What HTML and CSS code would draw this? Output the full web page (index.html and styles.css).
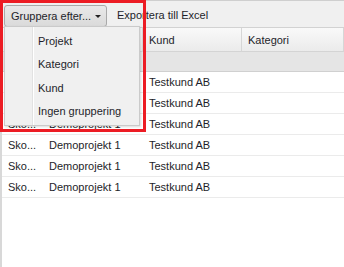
FILE: index.html
```html
<!DOCTYPE html>
<html lang="sv">
<head>
  <meta charset="UTF-8">
  <title>Tidrapporter</title>
  <link rel="stylesheet" href="styles.css">
</head>
<body>

  <div class="toolbar">
    <button class="tool-btn menu-btn">Gruppera efter... <span class="caret"></span></button>
    <button class="tool-btn plain">Exportera till Excel</button>
  </div>

  <div class="grid">
    <div class="head">&nbsp;</div>
    <div class="head">&nbsp;</div>
    <div class="head">Kund</div>
    <div class="head">Kategori</div>

    <div class="group-row"></div>

    <!-- first rows sit under the open dropdown -->
    <div class="cell"></div><div class="cell"></div><div class="cell">Testkund AB</div><div class="cell"></div>
    <div class="cell"></div><div class="cell"></div><div class="cell">Testkund AB</div><div class="cell"></div>
    <div class="cell">Sko...</div><div class="cell">Demoprojekt 1</div><div class="cell">Testkund AB</div><div class="cell"></div>
    <div class="cell">Sko...</div><div class="cell">Demoprojekt 1</div><div class="cell">Testkund AB</div><div class="cell"></div>
    <div class="cell">Sko...</div><div class="cell">Demoprojekt 1</div><div class="cell">Testkund AB</div><div class="cell"></div>
    <div class="cell">Sko...</div><div class="cell">Demoprojekt 1</div><div class="cell">Testkund AB</div><div class="cell"></div>
  </div>

  <!-- open dropdown of the "Gruppera efter" button -->
  <ul class="dropdown">
    <li>Projekt</li>
    <li>Kategori</li>
    <li>Kund</li>
    <li>Ingen gruppering</li>
  </ul>

  <div class="highlight"></div>

</body>
</html>
```

FILE: styles.css
```css
body {
  margin: 0;
  background: #ffffff;
  font-family: 'Liberation Sans', Arial, sans-serif;
  font-size: 11px;
  color: #1e1e2a;
  position: relative;
  height: 267px;
  overflow: hidden;
}

.toolbar {
  display: flex;
  align-items: center;
  gap: 4px;
  height: 26px;
  padding: 0 4px;
  background: #f0f0f0;
  border-top: 1px solid #cfcfcf;
  border-bottom: 1px solid #d2d2d2;
}

.tool-btn {
  font: inherit;
  color: inherit;
  height: 22px;
  padding: 0 6px;
  border: 1px solid transparent;
  border-radius: 3px;
  background: transparent;
  white-space: nowrap;
}

.menu-btn {
  width: 103px;
  margin-top: 3px;
  text-align: left;
  border-color: #a9a9a9;
  background: linear-gradient(#e9e9e9, #dadada);
}

.plain {
  margin-top: 2px;
  padding-left: 5px;
}

.caret {
  display: inline-block;
  margin-left: 1px;
  vertical-align: middle;
  border-left: 3px solid transparent;
  border-right: 3px solid transparent;
  border-top: 3px solid #222;
}

.grid {
  display: grid;
  grid-template-columns: 41px 100px 99px 1fr;
  border-left: 2px solid #d8d8d8;
  min-height: 240px;
  align-content: start;
}

.head {
  height: 23px;
  line-height: 24px;
  padding-left: 6px;
  background: linear-gradient(#f9f9f9, #ebebeb);
  border-right: 1px solid #d6d6d6;
  border-bottom: 1px solid #d4d4d4;
}

.group-row {
  grid-column: 1 / -1;
  height: 19px;
  background: #e5e5e5;
  border-bottom: 1px solid #d0d0d0;
}

.cell {
  height: 20px;
  line-height: 21px;
  padding-left: 6px;
  border-bottom: 1px solid #ebebeb;
  white-space: nowrap;
  overflow: hidden;
}

.dropdown {
  position: absolute;
  left: 4px;
  top: 26px;
  width: 136px;
  height: 100px;
  margin: 0;
  padding: 3px 0 0 0;
  box-sizing: border-box;
  list-style: none;
  background: linear-gradient(to right, #f0f0f0 27px, #e2e2e2 27px, #e2e2e2 28px, #ffffff 28px, #ffffff 29px, #f0f0f0 29px);
  border: 1px solid #cacaca;
  box-shadow: 1px 1px 2px rgba(0, 0, 0, 0.15);
}

.dropdown li {
  height: 23.3px;
  line-height: 23px;
  padding-left: 33px;
}

.highlight {
  position: absolute;
  left: 0;
  top: 0;
  width: 140px;
  height: 126px;
  border: 3px solid #ec1c24;
}
```
